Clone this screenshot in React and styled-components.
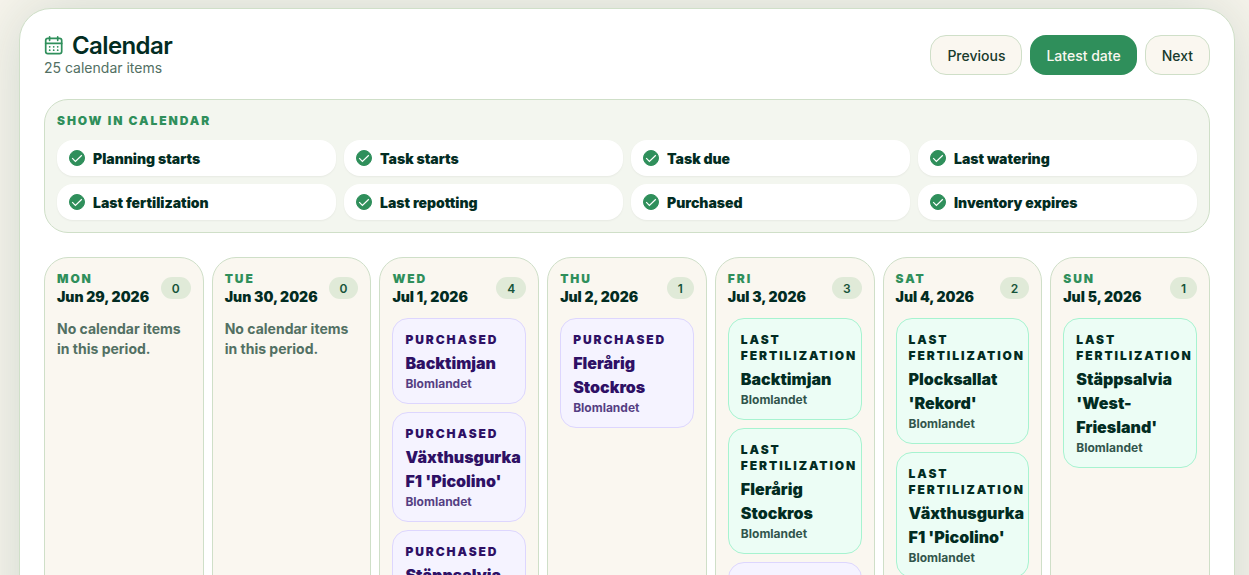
import React,{useState} from "react";
import styled,{createGlobalStyle} from "styled-components";

const FILTERS=[
  "Planning starts",
  "Task starts",
  "Task due",
  "Last watering",
  "Last fertilization",
  "Last repotting",
  "Purchased",
  "Inventory expires",
];

const purchased=(title)=>({kind:"purchased",label:"Purchased",title,place:"Blomlandet"});
const fertilized=(title)=>({kind:"fertilized",label:"Last fertilization",title,place:"Blomlandet"});

const DAYS=[
  {name:"Mon",date:"Jun 29, 2026",items:[]},
  {name:"Tue",date:"Jun 30, 2026",items:[]},
  {name:"Wed",date:"Jul 1, 2026",items:[
    purchased("Backtimjan"),
    purchased("Växthusgurka F1 'Picolino'"),
    purchased("Stäppsalvia 'West-Friesland'"),
    purchased("Plocksallat 'Rekord'"),
  ]},
  {name:"Thu",date:"Jul 2, 2026",items:[purchased("Flerårig Stockros")]},
  {name:"Fri",date:"Jul 3, 2026",items:[
    fertilized("Backtimjan"),
    fertilized("Flerårig Stockros"),
    purchased("Backtimjan"),
  ]},
  {name:"Sat",date:"Jul 4, 2026",items:[
    fertilized("Plocksallat 'Rekord'"),
    fertilized("Växthusgurka F1 'Picolino'"),
  ]},
  {name:"Sun",date:"Jul 5, 2026",items:[fertilized("Stäppsalvia 'West-Friesland'")]},
];

const KIND_COLORS={
  purchased:{text:"#2e1065",border:"#ddd6fe",background:"#f5f3ff"},
  fertilized:{text:"#022c22",border:"#a7f3d0",background:"#ecfdf5"},
};

export default function App(){

  const [checked,setChecked]=useState(FILTERS);

  const handleToggle=(name)=>{
    setChecked(checked.includes(name)?checked.filter((c)=>c!==name):[...checked,name]);
  }

  return(
    <>
    <GlobalStyle/>
    <Page>
      <Header>
        <div>
          <Title><CalendarIcon/>Calendar</Title>
          <Subtitle>25 calendar items</Subtitle>
        </div>
        <Actions>
          <Button type="button">Previous</Button>
          <Button type="button" $primary>Latest date</Button>
          <Button type="button">Next</Button>
        </Actions>
      </Header>

      <FilterPanel>
        <Legend as="h2">Show in calendar</Legend>
        <FilterGrid>
          {FILTERS.map((name)=>(
            <FilterLabel key={name}>
              <CheckWrapper>
                <Checkbox type="checkbox" checked={checked.includes(name)} onChange={()=>handleToggle(name)}/>
                {checked.includes(name) && <CheckMark/>}
              </CheckWrapper>
              {name}
            </FilterLabel>
          ))}
        </FilterGrid>
      </FilterPanel>

      <Week>
        {DAYS.map((day)=><Day key={day.date} {...day}/>)}
      </Week>
    </Page>
    </>
  )
}

function Day({name,date,items}){
  return(
    <DayColumn>
      <DayHeader>
        <div>
          <Legend>{name}</Legend>
          <DayDate>{date}</DayDate>
        </div>
        <Count>{items.length}</Count>
      </DayHeader>
      {items.length===0 && <Empty>No calendar items in this period.</Empty>}
      {items.map((item)=>(
        <Item key={item.kind+item.title} $kind={item.kind}>
          <ItemKind>{item.label}</ItemKind>
          <ItemTitle>{item.title}</ItemTitle>
          <ItemPlace>{item.place}</ItemPlace>
        </Item>
      ))}
    </DayColumn>
  )
}

function CalendarIcon(){
  return(
    <svg width="20" height="20" viewBox="0 0 20 20" fill="none" stroke="#2f8f5b" strokeWidth="1.7" strokeLinecap="round" strokeLinejoin="round" aria-hidden="true">
      <rect x="1.7" y="2.4" width="16" height="15.2" rx="2.2"/>
      <path d="M1.7 7.4h16M5.6 0.9v3.4M13.7 0.9v3.4"/>
      <path d="M5.7 10.8h.01M9.7 10.8h.01M13.7 10.8h.01M5.7 14.2h.01M9.7 14.2h.01M13.7 14.2h.01" strokeWidth="1.8"/>
    </svg>
  )
}

function CheckMark(){
  return(
    <svg width="16" height="16" viewBox="0 0 16 16" fill="none" stroke="#fff" strokeWidth="1.2" aria-hidden="true">
      <path d="M3.2 8.2l3.2 3.2 6.4-6.2"/>
    </svg>
  )
}

const GlobalStyle=createGlobalStyle`
  *{
    box-sizing:border-box;
  }
  body{
    margin:0;
    background-color:#f8f5ed;
    color:#022c22;
    font-family:Inter, sans-serif;
    -webkit-font-smoothing:antialiased;
  }
  h1,h2,p{
    margin:0;
  }
`;

const Page=styled.main`
  margin:8px 14px 24px 19px;
  padding:24px;
  background-color:#fff;
  border:1px solid #cfdfc8;
  border-radius:32px;
  box-shadow:0 0 64px rgba(20,83,60,0.18);
`;

const Header=styled.header`
  display:flex;
  justify-content:space-between;
  align-items:center;
  flex-wrap:wrap;
  gap:12px;
  margin-bottom:22px;
`;

const Title=styled.h1`
  display:flex;
  align-items:center;
  gap:8px;
  font-size:24px;
  line-height:26px;
  font-weight:600;
  letter-spacing:-0.025em;
`;

const Subtitle=styled.p`
  color:#527063;
  font-size:14px;
  line-height:18px;
`;

const Actions=styled.div`
  display:flex;
  gap:8px;
`;

const Button=styled.button`
  height:40px;
  padding:0 16px;
  border:${({$primary})=>$primary?"none":"1px solid #cfdfc8"};
  border-radius:16px;
  background-color:${({$primary})=>$primary?"#2f8f5b":"#faf7f0"};
  color:${({$primary})=>$primary?"#faf7f0":"#173a2c"};
  font-family:inherit;
  font-size:14px;
  font-weight:500;
  cursor:pointer;
`;

const FilterPanel=styled.section`
  display:flex;
  flex-direction:column;
  gap:10px;
  margin-bottom:24px;
  padding:12px;
  background-color:#f3f6ef;
  border:1px solid #cfdfc8;
  border-radius:24px;
`;

const Legend=styled.p`
  color:#2f8f5b;
  font-size:12px;
  line-height:18px;
  font-weight:900;
  letter-spacing:0.16em;
  text-transform:uppercase;
`;

const FilterGrid=styled.div`
  display:grid;
  grid-template-columns:repeat(4,1fr);
  gap:8px;
`;

const FilterLabel=styled.label`
  display:flex;
  align-items:flex-start;
  gap:8px;
  padding:8px 12px 6px;
  background-color:#fff;
  border-radius:16px;
  box-shadow:0 1px 2px rgba(0,0,0,0.05);
  font-size:14px;
  line-height:22px;
  font-weight:900;
  cursor:pointer;
`;

const CheckWrapper=styled.span`
  display:grid;
  padding-top:2px;
  > *{
    grid-area:1 / 1;
  }
  svg{
    pointer-events:none;
  }
`;

const Checkbox=styled.input`
  appearance:none;
  width:16px;
  height:16px;
  margin:0;
  border:1px solid #2f8f5b;
  border-radius:50%;
  background-color:#fff;
  &:checked{
    background-color:#2f8f5b;
  }
`;

const Week=styled.section`
  display:grid;
  grid-template-columns:repeat(7,minmax(0,1fr));
  gap:8px;
`;

const DayColumn=styled.article`
  display:flex;
  flex-direction:column;
  gap:8px;
  padding:12px;
  background-color:#faf7f0;
  border:1px solid #cfdfc8;
  border-radius:24px;
`;

const DayHeader=styled.div`
  display:flex;
  justify-content:space-between;
  align-items:center;
  margin-bottom:4px;
`;

const DayDate=styled.p`
  font-size:14px;
  line-height:18px;
  font-weight:900;
  white-space:nowrap;
`;

const Count=styled.span`
  padding:3px 11px 1px;
  background-color:#e0ead8;
  border-radius:16px;
  color:#17543a;
  font-size:12px;
  line-height:18px;
  font-weight:600;
`;

const Empty=styled.p`
  padding-top:1px;
  color:#527063;
  font-size:14px;
  line-height:20px;
  font-weight:700;
`;

const Item=styled.div`
  padding:13px 12px 10px;
  color:${({$kind})=>KIND_COLORS[$kind].text};
  background-color:${({$kind})=>KIND_COLORS[$kind].background};
  border:1px solid ${({$kind})=>KIND_COLORS[$kind].border};
  border-radius:16px;
`;

const ItemKind=styled.p`
  margin-bottom:3px;
  font-size:12px;
  line-height:16px;
  font-weight:900;
  letter-spacing:0.16em;
  text-transform:uppercase;
`;

const ItemTitle=styled.p`
  font-size:16px;
  line-height:24px;
  font-weight:900;
`;

const ItemPlace=styled.p`
  font-size:12px;
  line-height:18px;
  font-weight:700;
  opacity:0.8;
`;
